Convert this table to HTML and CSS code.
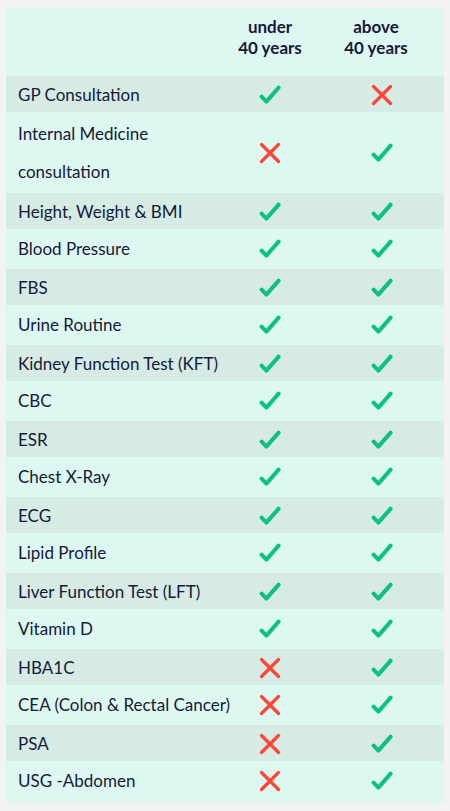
FILE: index.html
```html
<!DOCTYPE html>
<html>
<head>
<meta charset="utf-8">
<link rel="stylesheet" href="styles.css">
</head>
<body>
<svg width="0" height="0" class="defs">
  <defs>
    <symbol id="ok" viewBox="0 0 22 20"><path d="M2.6 11.6 L7.4 16.6 L19.6 2.6" fill="none" stroke="#0dc27f" stroke-width="4" stroke-linecap="round" stroke-linejoin="round"/></symbol>
    <symbol id="no" viewBox="0 0 22 22"><path d="M2.5 2.5 L19.5 19.5 M19.5 2.5 L2.5 19.5" fill="none" stroke="#ff4438" stroke-width="3.2" stroke-linecap="round"/></symbol>
  </defs>
</svg>
<div class="table">
  <div class="row head">
    <div class="c label"></div>
    <div class="c h">under<br>40 years</div>
    <div class="c h h2">above<br>40 years</div>
  </div>
  <div class="row alt"><div class="c label">GP Consultation</div><div class="c"><svg class="ok"><use href="#ok"/></svg></div><div class="c"><svg class="no"><use href="#no"/></svg></div></div>
  <div class="row tall"><div class="c label wrap">Internal Medicine<br>consultation</div><div class="c"><svg class="no"><use href="#no"/></svg></div><div class="c"><svg class="ok"><use href="#ok"/></svg></div></div>
  <div class="row alt"><div class="c label">Height, Weight &amp; BMI</div><div class="c"><svg class="ok"><use href="#ok"/></svg></div><div class="c"><svg class="ok"><use href="#ok"/></svg></div></div>
  <div class="row"><div class="c label">Blood Pressure</div><div class="c"><svg class="ok"><use href="#ok"/></svg></div><div class="c"><svg class="ok"><use href="#ok"/></svg></div></div>
  <div class="row alt"><div class="c label">FBS</div><div class="c"><svg class="ok"><use href="#ok"/></svg></div><div class="c"><svg class="ok"><use href="#ok"/></svg></div></div>
  <div class="row"><div class="c label">Urine Routine</div><div class="c"><svg class="ok"><use href="#ok"/></svg></div><div class="c"><svg class="ok"><use href="#ok"/></svg></div></div>
  <div class="row alt"><div class="c label">Kidney Function Test (KFT)</div><div class="c"><svg class="ok"><use href="#ok"/></svg></div><div class="c"><svg class="ok"><use href="#ok"/></svg></div></div>
  <div class="row"><div class="c label">CBC</div><div class="c"><svg class="ok"><use href="#ok"/></svg></div><div class="c"><svg class="ok"><use href="#ok"/></svg></div></div>
  <div class="row alt"><div class="c label">ESR</div><div class="c"><svg class="ok"><use href="#ok"/></svg></div><div class="c"><svg class="ok"><use href="#ok"/></svg></div></div>
  <div class="row"><div class="c label">Chest X-Ray</div><div class="c"><svg class="ok"><use href="#ok"/></svg></div><div class="c"><svg class="ok"><use href="#ok"/></svg></div></div>
  <div class="row alt"><div class="c label">ECG</div><div class="c"><svg class="ok"><use href="#ok"/></svg></div><div class="c"><svg class="ok"><use href="#ok"/></svg></div></div>
  <div class="row"><div class="c label">Lipid Profile</div><div class="c"><svg class="ok"><use href="#ok"/></svg></div><div class="c"><svg class="ok"><use href="#ok"/></svg></div></div>
  <div class="row alt"><div class="c label">Liver Function Test (LFT)</div><div class="c"><svg class="ok"><use href="#ok"/></svg></div><div class="c"><svg class="ok"><use href="#ok"/></svg></div></div>
  <div class="row"><div class="c label">Vitamin D</div><div class="c"><svg class="ok"><use href="#ok"/></svg></div><div class="c"><svg class="ok"><use href="#ok"/></svg></div></div>
  <div class="row alt"><div class="c label">HBA1C</div><div class="c"><svg class="no"><use href="#no"/></svg></div><div class="c"><svg class="ok"><use href="#ok"/></svg></div></div>
  <div class="row"><div class="c label">CEA (Colon &amp; Rectal Cancer)</div><div class="c"><svg class="no"><use href="#no"/></svg></div><div class="c"><svg class="ok"><use href="#ok"/></svg></div></div>
  <div class="row alt"><div class="c label">PSA</div><div class="c"><svg class="no"><use href="#no"/></svg></div><div class="c"><svg class="ok"><use href="#ok"/></svg></div></div>
  <div class="row"><div class="c label">USG -Abdomen</div><div class="c"><svg class="no"><use href="#no"/></svg></div><div class="c"><svg class="ok"><use href="#ok"/></svg></div></div>
</div>
</body>
</html>
```
FILE: styles.css
```css
html, body {
  margin: 0;
  padding: 0;
  background: #f3f3f3;
}
body {
  padding: 8px 6px;
  font-family: Lato, "Liberation Sans", sans-serif;
  font-size: 17px;
  color: #151a3a;
}
.defs {
  position: absolute;
  width: 0;
  height: 0;
}
.table {
  width: 438px;
  background: #ddf8f0;
  padding-bottom: 3px;
}
.row {
  display: grid;
  grid-template-columns: 208px 112px 112px 6px;
  height: 38px;
  align-items: center;
}
.row.alt {
  background: #d5ebe4;
  background-clip: padding-box;
  border-top: 1px solid transparent;
  border-bottom: 1px solid transparent;
  box-sizing: border-box;
}
.row.head {
  height: 67px;
  align-items: start;
}
.row.tall {
  height: 79px;
}
.c {
  display: flex;
  justify-content: center;
  align-items: center;
}
.c.label {
  display: block;
  padding-left: 12px;
  line-height: 38px;
  white-space: nowrap;
}
.c.h {
  padding-top: 8px;
  line-height: 21px;
  font-weight: 700;
  text-align: center;
}
.c.h2 {
  padding-right: 12px;
}
.ok {
  width: 22px;
  height: 20px;
}
.no {
  width: 22px;
  height: 22px;
}
```
